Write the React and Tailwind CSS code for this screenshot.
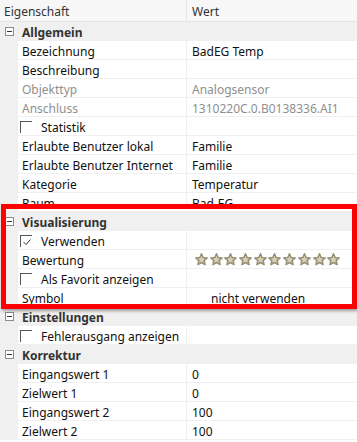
import React from "react";

function MinusBox() {
  return (
    <div className="w-[9px] h-[9px] border border-[#8c8c8c] bg-white flex items-center justify-center">
      <div className="w-[5px] h-px bg-[#333]" />
    </div>
  );
}

function Check({ checked }) {
  return (
    <div className="w-[12px] h-[12px] border-t border-l border-[#555] relative">
      {checked && (
        <svg className="absolute left-[1px] top-[1px]" width="10" height="10" viewBox="0 0 10 10">
          <path d="M1.5 5 L4 7.5 L8.5 2.5" fill="none" stroke="#333" strokeWidth="1" />
        </svg>
      )}
    </div>
  );
}

function Star() {
  return (
    <svg width="13" height="13" viewBox="0 0 24 24">
      <path
        d="M12 1.5l3.1 7 7.4.6-5.6 4.9 1.7 7.4L12 17.5l-6.6 3.9 1.7-7.4L1.5 9.1l7.4-.6z"
        fill="#d6d0b8"
        stroke="#969074"
        strokeWidth="2.8"
        strokeLinejoin="round"
      />
    </svg>
  );
}

function Category({ title }) {
  return (
    <div className="flex items-center h-[19px] bg-[#f0f0f0] border-b border-[#f0f0f0]">
      <div className="w-[18px] flex justify-center pl-[1px]">
        <MinusBox />
      </div>
      <span className="pl-[4px] pt-[3px] font-bold text-[#333]">{title}</span>
    </div>
  );
}

function Row({ label, value, muted, check, checked, children, valueClass = "" }) {
  return (
    <div className="flex h-[19px]">
      <div className="w-[18px] bg-[#f0f0f0]" />
      <div
        className={
          "w-[169px] flex items-center border-b border-r border-[#f0f0f0] bg-white " +
          (check !== undefined ? "pl-[2px]" : "pl-[4px]") +
          (muted ? " text-[#8f8f8f]" : " text-[#111]")
        }
      >
        {check !== undefined && (
          <div className="mr-[9px] mt-[1px]">
            <Check checked={checked} />
          </div>
        )}
        <span className="pt-[3px]">{label}</span>
      </div>
      <div
        className={
          "flex-1 flex items-center border-b border-[#f0f0f0] bg-white pl-[5px] " +
          (muted ? "text-[#8f8f8f] " : "text-[#111] ") +
          valueClass
        }
      >
        {children || <span className="pt-[3px]">{value}</span>}
      </div>
    </div>
  );
}

export default function App() {
  return (
    <div
      className="relative w-[357px] h-[442px] bg-white overflow-hidden text-[12px] leading-none"
      style={{ fontFamily: '"Noto Sans", "Open Sans", sans-serif' }}
    >
      <div className="flex h-[22px] bg-[#f7f7f7] border-b border-[#e4e4e4] text-[#333]">
        <div className="w-[187px] border-r border-[#e4e4e4] flex items-center pl-[4px] pt-[2px]">Eigenschaft</div>
        <div className="flex-1 flex items-center pl-[5px] pt-[2px]">Wert</div>
      </div>

      <Category title="Allgemein" />
      <Row label="Bezeichnung" value="BadEG Temp" />
      <Row label="Beschreibung" value="" />
      <Row label="Objekttyp" value="Analogsensor" muted />
      <Row label="Anschluss" value="1310220C.0.B0138336.AI1" muted />
      <Row label="Statistik" check={0} checked={false} value="" />
      <Row label="Erlaubte Benutzer lokal" value="Familie" />
      <Row label="Erlaubte Benutzer Internet" value="Familie" />
      <Row label="Kategorie" value="Temperatur" />
      <Row label="Raum" value="Bad-EG" />

      <Category title="Visualisierung" />
      <Row label="Verwenden" check={1} checked value="" />
      <Row label="Bewertung">
        <div className="flex gap-[1.7px] pl-[3px] pt-[1px]">
          {Array.from({ length: 10 }).map((_, i) => (
            <Star key={i} />
          ))}
        </div>
      </Row>
      <Row label="Als Favorit anzeigen" check={0} checked={false} value="" />
      <Row label="Symbol" value="nicht verwenden" valueClass="pl-[24px]" />

      <Category title="Einstellungen" />
      <Row label="Fehlerausgang anzeigen" check={0} checked={false} value="" />

      <Category title="Korrektur" />
      <Row label="Eingangswert 1" value="0" />
      <Row label="Zielwert 1" value="0" />
      <Row label="Eingangswert 2" value="100" />
      <Row label="Zielwert 2" value="100" />

      <div className="absolute left-[1px] top-[204px] w-[356px] h-[105px] border-[5px] border-[#ff0000] shadow-[1px_2px_3px_rgba(0,0,0,0.35)] pointer-events-none" />
    </div>
  );
}
